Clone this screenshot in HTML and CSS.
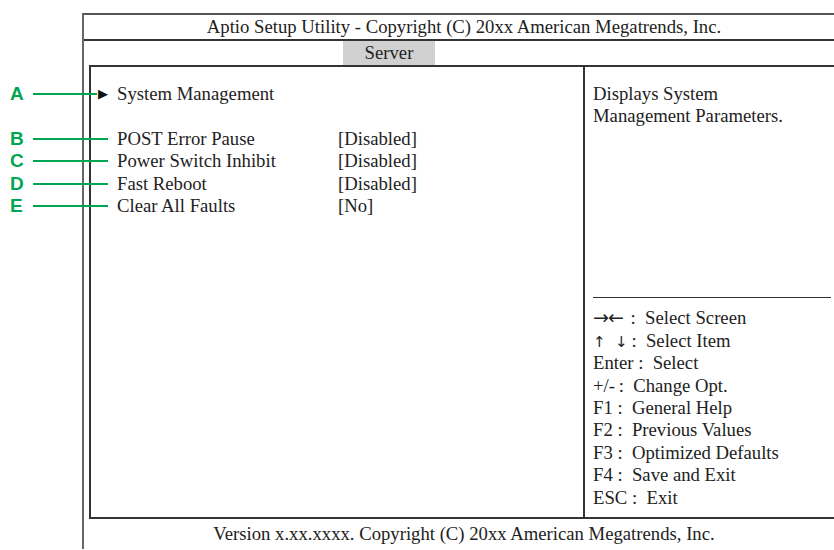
FILE: index.html
```html
<!DOCTYPE html>
<html lang="en">

<head>
    <meta charset="UTF-8">
    <meta name="viewport" content="width=device-width, initial-scale=1.0">
    <title>Aptio Setup Utility - Server</title>

    <link rel="stylesheet" href="styles.css">
</head>

<body>

    <!-- callout labels on the left -->
    <div class="callouts">
        <div class="callout"><span class="tag">A</span><span class="lead short"></span></div>
        <div class="callout gap"></div>
        <div class="callout"><span class="tag">B</span><span class="lead"></span></div>
        <div class="callout"><span class="tag">C</span><span class="lead"></span></div>
        <div class="callout"><span class="tag">D</span><span class="lead"></span></div>
        <div class="callout"><span class="tag">E</span><span class="lead"></span></div>
    </div>

    <div class="frame">
        <div class="title">Aptio Setup Utility - Copyright (C) 20xx American Megatrends, Inc.</div>

        <div class="tabs">
            <span class="tab">Server</span>
        </div>

        <div class="box">
            <div class="menu">
                <div class="row">
                    <span class="mark">&#9654;</span>
                    <span class="name">System Management</span>
                    <span class="value"></span>
                </div>
                <div class="row"></div>
                <div class="row">
                    <span class="mark"></span>
                    <span class="name">POST Error Pause</span>
                    <span class="value">[Disabled]</span>
                </div>
                <div class="row">
                    <span class="mark"></span>
                    <span class="name">Power Switch Inhibit</span>
                    <span class="value">[Disabled]</span>
                </div>
                <div class="row">
                    <span class="mark"></span>
                    <span class="name">Fast Reboot</span>
                    <span class="value">[Disabled]</span>
                </div>
                <div class="row">
                    <span class="mark"></span>
                    <span class="name">Clear All Faults</span>
                    <span class="value">[No]</span>
                </div>
            </div>

            <div class="help">
                <div class="desc">
                    Displays System<br>
                    Management Parameters.
                </div>

                <div class="keys">
                    <div><span class="arrows wide">&rarr;&larr;</span>&thinsp;:&nbsp; Select Screen</div>
                    <div><span class="arrows">&uarr;&nbsp; &darr;</span>&thinsp;:&nbsp; Select Item</div>
                    <div>Enter :&nbsp; Select</div>
                    <div>+/-&thinsp;:&nbsp; Change Opt.</div>
                    <div>F1 :&nbsp; General Help</div>
                    <div>F2 :&nbsp; Previous Values</div>
                    <div>F3 :&nbsp; Optimized Defaults</div>
                    <div>F4 :&nbsp; Save and Exit</div>
                    <div>ESC :&nbsp; Exit</div>
                </div>
            </div>
        </div>

        <div class="footer">Version x.xx.xxxx. Copyright (C) 20xx American Megatrends, Inc.</div>
    </div>

</body>
</html>
```

FILE: styles.css
```css
html,
body {
    height: 100%;
}

body {
    margin: 0;
    background: #fff;
    color: #222;
    font-family: "Liberation Serif", "Times New Roman", serif;
    font-size: 18.7px;
    overflow: hidden;
    position: relative;
}

/* green callouts A-E */
.callouts {
    position: absolute;
    left: 10px;
    top: 83px;
}

.callout {
    display: flex;
    align-items: center;
    height: 22.4px;
}

.tag {
    width: 23px;
    color: #00a651;
    font-family: "Liberation Sans", Arial, sans-serif;
    font-weight: bold;
    font-size: 19px;
}

.lead {
    width: 75px;
    height: 2px;
    background: #00a651;
}

.lead.short {
    width: 64px;
}

/* setup screen */
.frame {
    margin: 13px 0 0 82px;
    width: 770px;
    border-left: 2px solid #666;
    border-top: 2px solid #555;
}

.title {
    height: 24px;
    line-height: 24px;
    text-align: center;
    padding-right: 10px;
    border-bottom: 2px solid #333;
}

.tabs {
    height: 24px;
    padding-left: 259px;
}

.tab {
    display: inline-block;
    width: 92px;
    height: 24px;
    line-height: 24px;
    text-align: center;
    background: #d1d1d1;
}

.box {
    display: flex;
    margin-left: 5px;
    width: 750px;
    height: 450px;
    border: 2px solid #333;
}

.menu {
    width: 492px;
    padding-top: 16px;
    border-right: 2px solid #333;
}

.row {
    display: flex;
    height: 22.4px;
    line-height: 22.4px;
}

.mark {
    width: 26px;
    padding-left: 7px;
    box-sizing: border-box;
    font-family: "DejaVu Sans", sans-serif;
    font-size: 13px;
    color: #111;
}

.name {
    width: 221px;
}

.help {
    flex: 1;
    display: flex;
    flex-direction: column;
    padding-left: 8px;
}

.desc {
    padding-top: 16px;
    line-height: 22.4px;
}

.keys {
    margin-top: auto;
    margin-right: 10px;
    padding: 9px 0 8px;
    border-top: 1px solid #333;
    line-height: 22.4px;
}

.arrows {
    font-family: "DejaVu Sans", sans-serif;
    font-size: 15px;
    line-height: 1;
}

.arrows.wide {
    font-size: 19px;
    letter-spacing: -1px;
    margin-right: 4px;
}

.footer {
    height: 30px;
    line-height: 30px;
    text-align: center;
    padding-right: 10px;
}
```
